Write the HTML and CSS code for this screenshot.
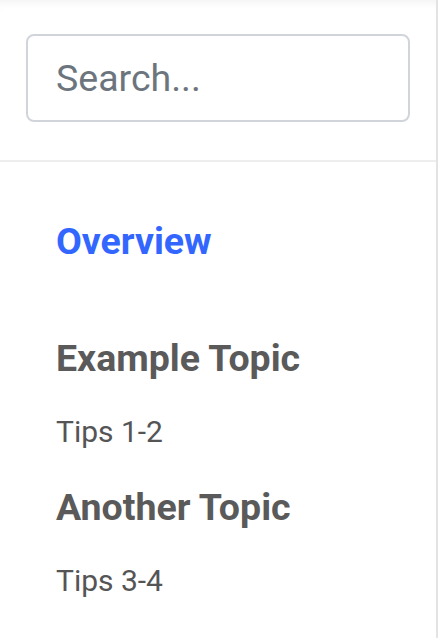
FILE: index.html
```html
<!DOCTYPE html>
<html>
<head>
<meta charset="utf-8">
<link rel="stylesheet" href="styles.css">
</head>
<body>
<aside class="sidebar">
  <div class="search-wrap">
    <input class="search" type="text" placeholder="Search...">
  </div>
  <nav class="menu">
    <a class="overview" href="#">Overview</a>
    <div class="group">
      <h3 class="topic">Example Topic</h3>
      <a class="tip" href="#">Tips 1-2</a>
    </div>
    <div class="group">
      <h3 class="topic">Another Topic</h3>
      <a class="tip" href="#">Tips 3-4</a>
    </div>
  </nav>
</aside>
</body>
</html>
```
FILE: styles.css
```css
html, body {
  margin: 0;
  padding: 0;
  background: #ffffff;
  font-family: Roboto, "Liberation Sans", sans-serif;
}
.sidebar {
  width: 436px;
  height: 638px;
  border-right: 2px solid #e3e3e3;
  background: #ffffff;
  box-shadow: inset 0 8px 8px -6px rgba(0,0,0,0.06);
  box-sizing: content-box;
}
.search-wrap {
  padding: 34px 26px 38px 26px;
  border-bottom: 2px solid #eeeeee;
}
.search {
  display: block;
  box-sizing: border-box;
  width: 384px;
  height: 88px;
  border: 2px solid #d1d5db;
  border-radius: 8px;
  padding: 0 28px;
  font-family: Roboto, "Liberation Sans", sans-serif;
  font-size: 37.5px;
  color: #495057;
  outline: none;
  background: #fff;
}
.search::placeholder {
  color: #6c757d;
}
.menu {
  display: flex;
  flex-direction: column;
  padding: 55px 56px 0 56px;
}
.overview {
  font-size: 37.5px;
  font-weight: 700;
  color: #3366ff;
  text-decoration: none;
  line-height: 48px;
  margin-bottom: 69px;
}
.group {
  display: flex;
  flex-direction: column;
  margin-bottom: 31px;
}
.topic {
  margin: 0;
  font-size: 37.5px;
  font-weight: 700;
  color: #5a5a5a;
  line-height: 48px;
  margin-bottom: 30px;
}
.tip {
  font-size: 30px;
  color: #555555;
  text-decoration: none;
  line-height: 40px;
}
```
